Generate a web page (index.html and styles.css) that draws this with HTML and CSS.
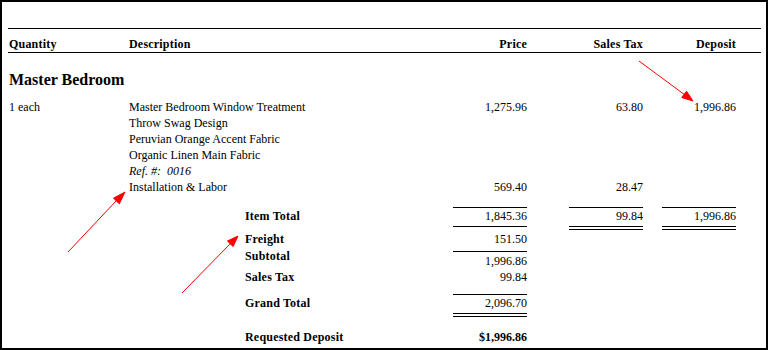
FILE: index.html
```html
<!DOCTYPE html>
<html lang="en">
<head>
    <meta charset="UTF-8">
    <meta name="viewport" content="width=device-width, initial-scale=1.0">
    <title>Proposal</title>
    <link rel="stylesheet" href="styles.css">
</head>
<body>

    <div class="sheet">
        <table class="invoice">
            <colgroup>
                <col class="c-qty">
                <col class="c-desc">
                <col class="c-price">
                <col class="c-tax">
                <col class="c-dep">
            </colgroup>

            <!-- Column headings -->
            <thead>
                <tr>
                    <th class="qty">Quantity</th>
                    <th>Description</th>
                    <th class="num">Price</th>
                    <th class="num">Sales Tax</th>
                    <th class="num dep">Deposit</th>
                </tr>
            </thead>

            <tbody>
                <tr class="room">
                    <td colspan="5">Master Bedroom</td>
                </tr>

                <!-- Line items -->
                <tr class="item">
                    <td class="qty">1 each</td>
                    <td>Master Bedroom Window Treatment</td>
                    <td class="num">1,275.96</td>
                    <td class="num">63.80</td>
                    <td class="num dep">1,996.86</td>
                </tr>
                <tr class="item">
                    <td></td>
                    <td>Throw Swag Design</td>
                    <td></td><td></td><td></td>
                </tr>
                <tr class="item">
                    <td></td>
                    <td>Peruvian Orange Accent Fabric</td>
                    <td></td><td></td><td></td>
                </tr>
                <tr class="item">
                    <td></td>
                    <td>Organic Linen Main Fabric</td>
                    <td></td><td></td><td></td>
                </tr>
                <tr class="item">
                    <td></td>
                    <td class="ref">Ref. #:&nbsp; 0016</td>
                    <td></td><td></td><td></td>
                </tr>
                <tr class="item">
                    <td></td>
                    <td>Installation &amp; Labor</td>
                    <td class="num">569.40</td>
                    <td class="num">28.47</td>
                    <td></td>
                </tr>

                <!-- Totals -->
                <tr class="total item-total">
                    <td></td>
                    <td class="label">Item Total</td>
                    <td class="num"><span class="amt over under">1,845.36</span></td>
                    <td class="num"><span class="amt over double">99.84</span></td>
                    <td class="num dep"><span class="amt over double">1,996.86</span></td>
                </tr>
                <tr class="total freight">
                    <td></td>
                    <td class="label">Freight</td>
                    <td class="num"><span class="amt">151.50</span></td>
                    <td></td><td></td>
                </tr>
                <tr class="total subtotal">
                    <td></td>
                    <td class="label">Subtotal</td>
                    <td class="num"><span class="amt over">1,996.86</span></td>
                    <td></td><td></td>
                </tr>
                <tr class="total tax">
                    <td></td>
                    <td class="label">Sales Tax</td>
                    <td class="num"><span class="amt">99.84</span></td>
                    <td></td><td></td>
                </tr>
                <tr class="total grand">
                    <td></td>
                    <td class="label">Grand Total</td>
                    <td class="num"><span class="amt over double">2,096.70</span></td>
                    <td></td><td></td>
                </tr>
                <tr class="total deposit">
                    <td></td>
                    <td class="label">Requested Deposit</td>
                    <td class="num"><span class="amt strong">$1,996.86</span></td>
                    <td></td><td></td>
                </tr>
            </tbody>
        </table>

        <!-- Red callout arrows drawn on top of the sheet -->
        <svg class="marks" width="769" height="350" viewBox="0 0 769 350">
            <g stroke="#f00" stroke-width="1" fill="#f00">
                <line x1="639" y1="61" x2="685" y2="95"/>
                <polygon points="693,101 681.7,97.6 686.5,91.2"/>

                <line x1="68" y1="252" x2="117" y2="200"/>
                <polygon points="125,192 119.3,203.8 113.5,198.2"/>

                <line x1="182" y1="293" x2="231" y2="243"/>
                <polygon points="238,236 233.1,246.6 227.4,241"/>
            </g>
        </svg>
    </div>

</body>
</html>
```

FILE: styles.css
```css
* {
    margin: 0;
    padding: 0;
    box-sizing: border-box;
}

body {
    font-family: "Liberation Serif", "Times New Roman", serif;
    font-size: 12px;
    color: #000;
    background-color: #fff;
}

.sheet {
    position: relative;
    width: 768px;
    height: 350px;
    border: 2px solid #000;
    padding: 26px 5px 0 6px;
    background-color: #fff;
}

.invoice {
    width: 753px;
    table-layout: fixed;
    border-collapse: separate;
    border-spacing: 0;
}

.c-qty { width: 121px; }
.c-desc { width: 324px; }
.c-price { width: 74px; }
.c-tax { width: 116px; }
.c-dep { width: 118px; }

.invoice th,
.invoice td {
    padding: 0;
    line-height: 16px;
    text-align: left;
    vertical-align: top;
    white-space: nowrap;
}

.invoice th {
    font-weight: bold;
    letter-spacing: 0.2px;
    border-top: 1px solid #000;
    border-bottom: 1px solid #000;
    padding-top: 7px;
}

.invoice .qty {
    padding-left: 1px;
}

.invoice .num {
    text-align: right;
}

.invoice .dep {
    padding-right: 25px;
}

/* Room heading */
.room td {
    font-size: 16px;
    font-weight: bold;
    line-height: 20px;
    padding: 17px 0 9px 1px;
}

.ref {
    font-style: italic;
}

/* Totals block */
.total .label {
    font-weight: bold;
    letter-spacing: 0.2px;
    padding-left: 116px;
}

.amt {
    display: block;
    width: 74px;
    margin-left: auto;
    text-align: right;
}

.amt.over {
    border-top: 1px solid #000;
}

.amt.under {
    border-bottom: 1px solid #000;
    padding-bottom: 2px;
}

.amt.double {
    border-bottom: 4px double #000;
    padding-bottom: 2px;
}

.amt.strong {
    font-weight: bold;
}

.item-total td { padding-top: 12px; }
.item-total .label { padding-top: 13px; }

.freight td { padding-top: 1px; }

.subtotal td { padding-top: 4px; }
.subtotal .label { padding-top: 1px; }
.subtotal .amt { padding-top: 1px; }

.grand td { padding-top: 9px; }
.grand .label { padding-top: 10px; }

.deposit td { padding-top: 12px; }

.marks {
    position: absolute;
    top: -2px;
    left: -2px;
    pointer-events: none;
}
```
